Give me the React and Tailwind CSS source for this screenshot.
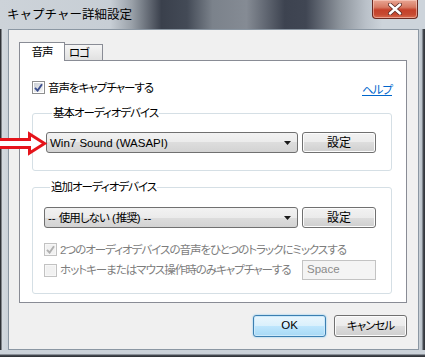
import React from "react";

const JP = "text-[11.5px] tracking-[-1px] leading-[14px]";

function Checkbox({ checked, disabled }) {
  return (
    <div
      className={`w-[13px] h-[13px] border shrink-0 p-[1px] ${
        disabled ? "border-[#c2c2c2] bg-[#f7f7f7]" : "border-[#8e8f8f] bg-white"
      }`}
    >
      <div
        className={`w-full h-full flex items-center justify-center ${
          disabled
            ? "bg-[#f1f1f1]"
            : "bg-[linear-gradient(135deg,#cbcfd5,#f6f6f6)]"
        }`}
      >
        {checked && (
          <svg width="9" height="9" viewBox="0 0 9 9">
            <path
              d="M1 4.8 L3.6 7.6 L8 1.2"
              fill="none"
              stroke={disabled ? "#b0b0b0" : "#3c4f8f"}
              strokeWidth="1.9"
            />
          </svg>
        )}
      </div>
    </div>
  );
}

function Select({ children, className }) {
  return (
    <div
      className={`h-[21px] min-w-0 border border-[#707070] rounded-[3px] bg-[linear-gradient(#f2f2f2_0%,#ebebeb_50%,#dddddd_50%,#d3d3d3_100%)] flex items-center pl-[3px] pr-[6px] ${className}`}
    >
      <span className="flex-1 text-[11.5px] leading-[14px] text-black whitespace-nowrap">
        {children}
      </span>
      <svg width="7" height="4" viewBox="0 0 7 4">
        <path d="M0 0H7L3.5 4Z" fill="#1a1a1a" />
      </svg>
    </div>
  );
}

function Button({ children, className }) {
  return (
    <div
      className={`h-[21px] w-[74px] shrink-0 border border-[#707070] rounded-[3px] bg-[linear-gradient(#f2f2f2_0%,#ebebeb_50%,#dddddd_50%,#cfcfcf_100%)] shadow-[inset_0_0_0_1px_#fcfcfc] flex items-center justify-center text-[12px] text-black ${className}`}
    >
      {children}
    </div>
  );
}

export default function App() {
  return (
    <div className="w-[425px] h-[357px] overflow-hidden relative bg-[#c8d0d8] font-['Liberation_Sans','Noto_Sans_CJK_JP',sans-serif] text-black">
      {/* title bar */}
      <div className="h-[29px] flex items-start bg-[linear-gradient(90deg,#cdd3d9_0%,#c7ced5_26%,#9aa1a9_31%,#3a404c_38%,#434a56_44%,#7b828b_50%,#858b94_58%,#3d4350_67%,#404653_72%,#8d949c_80%,#b9c0c8_86%,#cdd4db_90%,#cdd4db_100%)]">
        <div className="pl-[7px] mt-[6px] text-[12.5px] leading-[16px] text-black flex-1 whitespace-nowrap font-['Noto_Sans_CJK_JP',sans-serif]">
          キャプチャー詳細設定
        </div>
        <div className="mr-[7px] w-[46px] h-[19px] rounded-b-[4px] border border-t-0 border-[#6b2a22] bg-[linear-gradient(#e9a693_0%,#d77a63_40%,#c4402a_55%,#c64a32_80%,#d86a4e_100%)] shadow-[inset_0_0_0_1px_rgba(255,220,210,0.5)] flex items-center justify-center">
          <svg width="14" height="12" viewBox="0 0 14 12">
            <path d="M2 1.5 L12 10.5 M12 1.5 L2 10.5" stroke="#5a2a24" strokeWidth="4" strokeLinecap="round" />
            <path d="M2 1.5 L12 10.5 M12 1.5 L2 10.5" stroke="#ffffff" strokeWidth="2.4" strokeLinecap="round" />
          </svg>
        </div>
      </div>

      {/* body row */}
      <div className="flex h-[321px]">
        <div className="w-[8px] bg-[linear-gradient(90deg,#2f3237_0px,#2f3237_1px,#d3d9df_2px,#cbd2d9_100%)]" />
        {/* client area */}
        <div className="w-[411px] border border-[#8b97a3] bg-[#f0f0f0] pt-[12px] pl-[10px] pr-[11px] pb-[12px] flex flex-col [font-feature-settings:'palt']">
          {/* tabs */}
          <div className="flex items-end h-[18px]">
            <div className={`relative z-10 -mb-px w-[46px] h-[19px] border border-b-0 border-[#898c95] bg-white flex items-center justify-center ${JP}`}>
              音声
            </div>
            <div className={`w-[38px] h-[16px] border-t border-r border-[#898c95] bg-[linear-gradient(#f5f5f5,#e1e1e1)] flex items-center pl-[4px] ${JP}`}>
              ロゴ
            </div>
          </div>
          {/* panel */}
          <div className="h-[243px] border border-[#898c95] bg-white pt-[19px] pl-[12px] pr-[14px] pb-[8px] flex flex-col">
            <div className="flex items-center h-[15px]">
              <Checkbox checked />
              <span className={`ml-[3px] ${JP}`}>音声をキャプチャーする</span>
              <span className={`ml-auto text-[#0066cc] underline mt-[4px] ${JP}`}>ヘルプ</span>
            </div>

            <fieldset className="min-w-0 mt-[11px] border border-[#d5dfe5] rounded-[3px] pl-[13px] pr-[15px] pt-[12px] pb-[17px]">
              <legend className={`ml-[6px] px-[1px] ${JP}`}>基本オーディオデバイス</legend>
              <div className="flex items-center">
                <Select className="flex-1">Win7 Sound (WASAPI)</Select>
                <Button className="ml-[4px]">設定</Button>
              </div>
            </fieldset>

            <fieldset className="min-w-0 mt-[9px] border border-[#d5dfe5] rounded-[3px] pl-[11px] pr-[15px] pt-[13px] pb-[13px]">
              <legend className={`ml-[6px] px-[1px] ${JP}`}>追加オーディオデバイス</legend>
              <div className="flex items-center">
                <Select className="flex-1">
                  -- <span className="tracking-[-1px]">使用しない</span> (<span className="tracking-[-1px]">推奨</span>) --
                </Select>
                <Button className="ml-[4px]">設定</Button>
              </div>
              <div className="mt-[15px] flex items-center h-[13px]">
                <Checkbox checked disabled />
                <span className={`ml-[3px] text-[#7d7d7d] whitespace-nowrap ${JP}`}>
                  2つのオーディオデバイスの音声をひとつのトラックにミックスする
                </span>
              </div>
              <div className="mt-[4px] flex items-center h-[20px]">
                <Checkbox disabled />
                <span className={`ml-[3px] text-[#7d7d7d] whitespace-nowrap ${JP}`}>
                  ホットキーまたはマウス操作時のみキャプチャーする
                </span>
                <div className="ml-auto w-[74px] h-[20px] shrink-0 border border-[#c3c3c3] bg-[#f4f4f4] flex items-center pl-[4px] text-[11.5px] text-[#8a8a8a]">
                  Space
                </div>
              </div>
            </fieldset>
          </div>

          {/* bottom buttons */}
          <div className="mt-[12px] flex justify-end gap-[8px]">
            <div className="h-[22px] w-[73px] border border-[#3c7fb1] rounded-[3px] bg-[linear-gradient(#eaf6fd_0%,#d9f0fc_50%,#bee6fd_50%,#a7d9f5_100%)] shadow-[inset_0_0_0_1px_#cbe9fb,0_0_2px_#6fc3ef] flex items-center justify-center text-[11.5px]">
              OK
            </div>
            <div className={`h-[22px] w-[73px] border border-[#707070] rounded-[3px] bg-[linear-gradient(#f2f2f2_0%,#ebebeb_50%,#dddddd_50%,#cfcfcf_100%)] shadow-[inset_0_0_0_1px_#fcfcfc] flex items-center justify-center ${JP}`}>
              キャンセル
            </div>
          </div>
        </div>
        <div className="w-[6px] bg-[linear-gradient(90deg,#cbd2d9_0px,#b9c1c9_3px,#4a4f57_4px,#2f3237_100%)]" />
      </div>
      <div className="h-[7px] bg-[linear-gradient(#cbd2d9_0px,#cbd2d9_4px,#4a4f57_5px,#2a2d31_7px)]" />

      {/* red annotation arrow */}
      <svg className="absolute left-0 top-[131px]" width="48" height="26" viewBox="0 0 48 26">
        <path
          d="M-2 8.5 H29.5 V3 L44.5 12.5 L29.5 22 V16.5 H-2 Z"
          fill="#ffffff"
          stroke="#e5141b"
          strokeWidth="3"
          strokeLinejoin="miter"
        />
      </svg>
    </div>
  );
}
